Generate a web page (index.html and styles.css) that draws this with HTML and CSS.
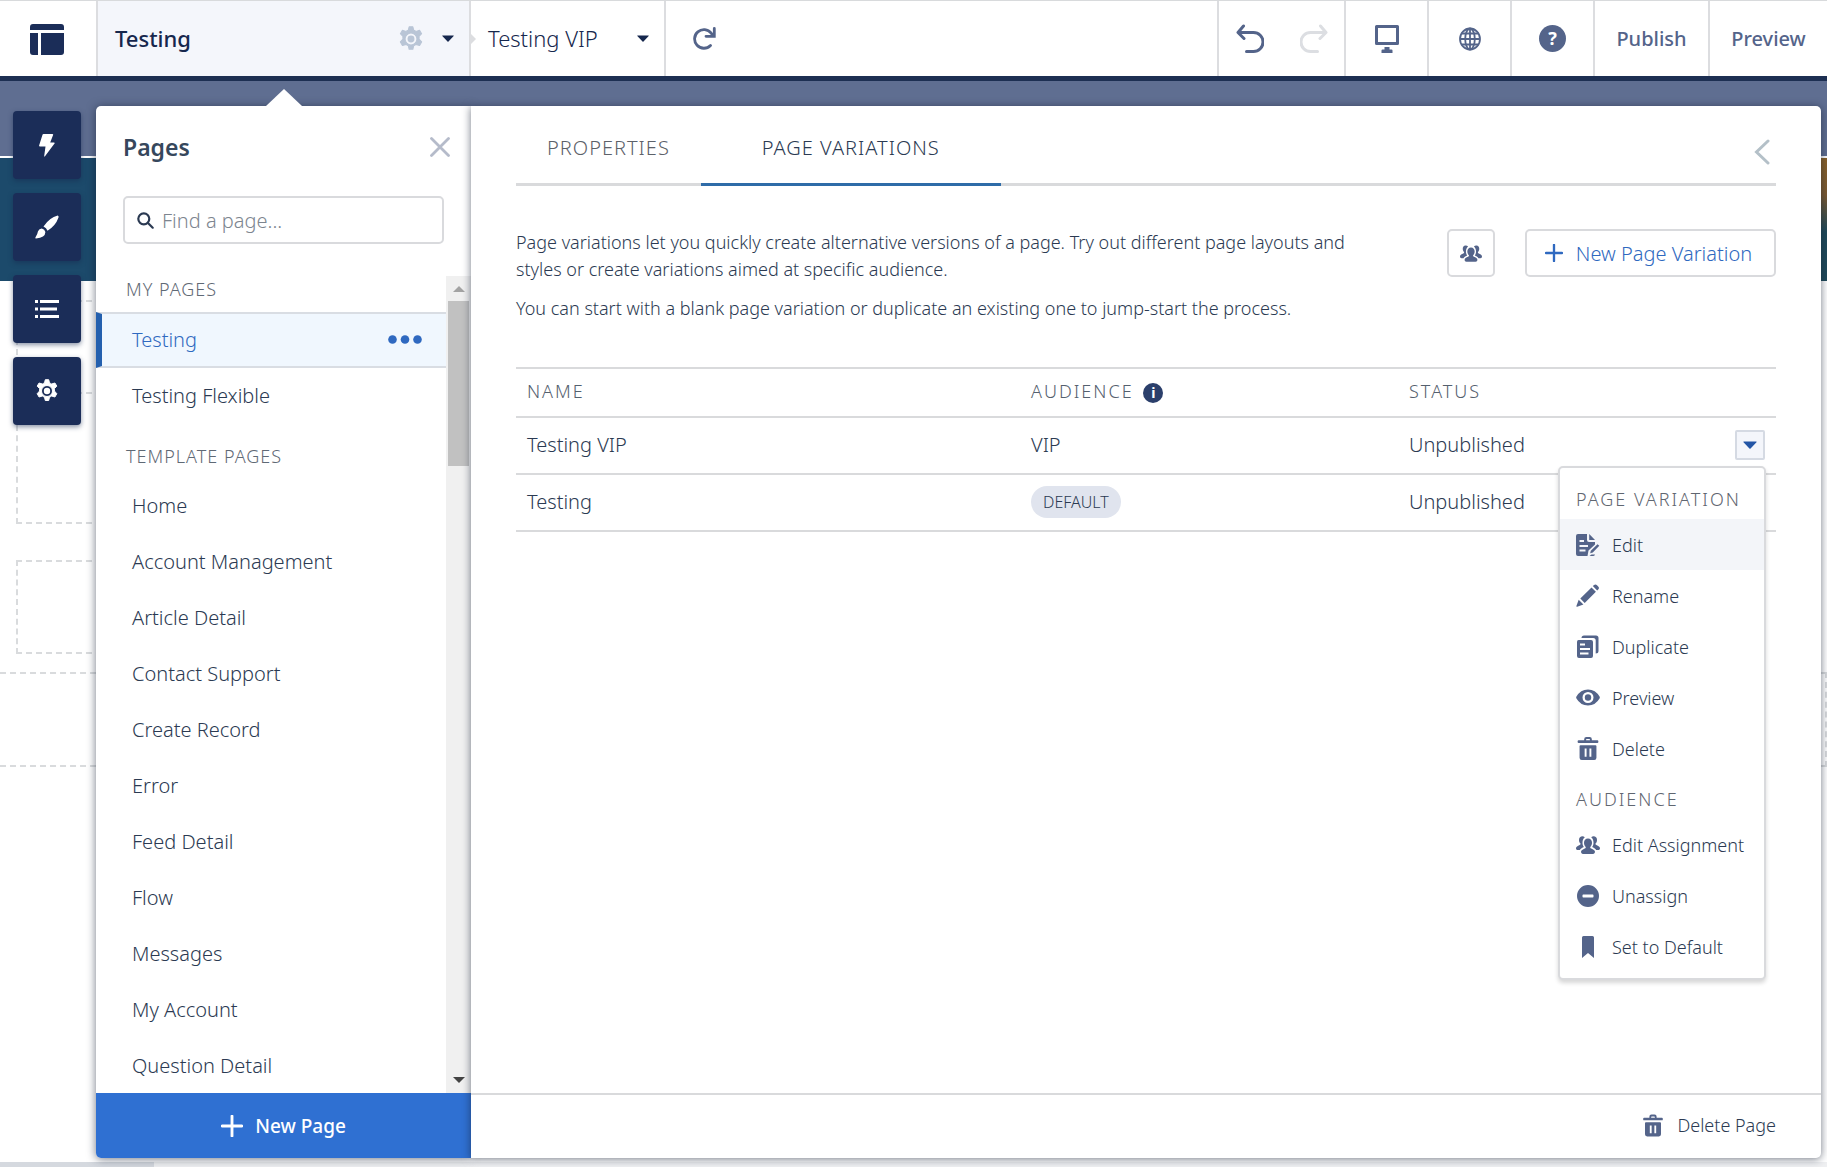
FILE: index.html
```html
<!DOCTYPE html>
<html lang="en">
  <head>
    <meta charset="UTF-8">
    <meta name="viewport" content="width=device-width, initial-scale=1">
    <link rel="stylesheet" href="styles.css">
    <title>Experience Builder</title>
  </head>
  <body>
    <!-- shared icons -->
    <svg class="sprite" aria-hidden="true">
      <symbol id="gear" viewBox="0 0 24 24">
        <path fill-rule="evenodd" d="M10.300 0.700h3.400l0.800 3.200q1.100 0.400 2.100 1.100l3.300-1 1.900 3.100-2.400 2.500q0.200 1.200 0 2.400l2.400 2.700-1.900 3.300-3.300-1q-1 0.800-2.100 1.200l-0.800 3.300h-3.400l-0.800-3.300q-1.100-0.400-2.100-1.200l-3.300 1-1.900-3.300 2.400-2.700q-0.200-1.200 0-2.400l-2.400-2.500 1.900-3.100 3.300 1q1-0.700 2.100-1.100zM12 6.500a5.500 5.500 0 1 0 0 11a5.500 5.500 0 1 0 0-11z" stroke="currentColor" stroke-width="1" stroke-linejoin="round"/>
        <circle cx="12" cy="12" r="3.200"/>
      </symbol>
      <symbol id="caret" viewBox="0 0 12 7">
        <path d="M0.500 0.500h11q0.500 0 0.200 0.500l-5.200 5.500q-0.500 0.500-1 0l-5.200-5.500q-0.300-0.500 0.200-0.500z"/>
      </symbol>
      <symbol id="people" viewBox="0 0 24 18">
        <path d="M12 2.500c2.500 0 4 1.900 4 4.300 0 1.700-0.700 3-1.500 3.900-0.600 0.800-0.200 1.500 0.700 1.900 2 0.900 3.800 1.700 3.800 3.200 0 1.200-0.800 2.200-2 2.200H7c-1.200 0-2-1-2-2.200 0-1.500 1.800-2.300 3.800-3.200 0.900-0.400 1.300-1.100 0.700-1.900C8.700 9.800 8 8.500 8 6.800c0-2.400 1.500-4.300 4-4.300z"/>
        <path d="M8.800 1.300C8 0.500 7 0.200 6 0.300 4 0.500 3 2 3 3.900c0 1.400 0.500 2.600 1.300 3.400 0.500 0.700 0.100 1.400-0.700 1.700C1.600 9.900 0 10.700 0 12.300c0 1 0.700 1.800 1.700 1.800h2.100c0.900-1.600 2.600-2.400 4-3C6.900 9.900 6.500 8.400 6.500 6.800c0-2.300 0.800-4.300 2.300-5.500zM15.200 1.300c0.800-0.800 1.800-1.100 2.800-1 2 0.200 3 1.700 3 3.600 0 1.400-0.500 2.600-1.300 3.400-0.500 0.700-0.100 1.400 0.700 1.700 2 0.900 3.600 1.700 3.600 3.300 0 1-0.700 1.800-1.700 1.800h-2.100c-0.900-1.600-2.600-2.400-4-3 0.900-1.200 1.300-2.700 1.300-4.300 0-2.300-0.800-4.300-2.300-5.500z"/>
      </symbol>
      <symbol id="trash" viewBox="0 0 22 24">
        <path fill-rule="evenodd" d="M1.200 3.500H7V2.300Q7 0 9.300 0h3.400Q15 0 15 2.300v1.200h5.800q1 0 1 1v0.800q0 1-1 1H1.200q-1 0-1-1V4.500q0-1 1-1zM9 3.500h4V2.600q0-0.600-0.600-0.600H9.600Q9 2 9 2.600z"/>
        <path fill-rule="evenodd" d="M3.200 8.500h15.600q1 0 1 1v12.200q0 2.300-2.300 2.300h-13q-2.300 0-2.300-2.300V9.500q0-1 1-1zM7.500 12v8.500h2V12zM12.500 12v8.500h2V12z"/>
      </symbol>
      <symbol id="plus" viewBox="0 0 20 20">
        <path d="M10 1v18M1 10h18" fill="none" stroke="currentColor" stroke-width="2.600" stroke-linecap="round"/>
      </symbol>
    </svg>

    <header class="topbar">
      <button class="bar-cell logo" aria-label="Builder menu">
        <svg width="34" height="31" viewBox="0 0 34 31">
          <path d="M3 0h28q3 0 3 3v3H0V3q0-3 3-3zM0 9h8v22H3q-3 0-3-3zM11 9h23v19q0 3-3 3H11z"/>
        </svg>
      </button>
      <div class="bar-cell page-picker">
        <span class="picker-name">Testing</span>
        <button class="icon-btn pale" aria-label="Page settings"><svg width="26" height="26"><use href="#gear"/></svg></button>
        <button class="icon-btn" aria-label="Choose page"><svg width="12" height="7"><use href="#caret"/></svg></button>
      </div>
      <div class="bar-cell variation-picker">
        <span>Testing VIP</span>
        <button class="icon-btn" aria-label="Choose variation"><svg width="12" height="7"><use href="#caret"/></svg></button>
      </div>
      <button class="icon-btn refresh" aria-label="Refresh">
        <svg width="24" height="24" viewBox="0 0 24 24" fill="none" stroke="currentColor" stroke-width="2.800">
          <path d="M17.500 18.500A9.300 9.300 0 1 1 18.200 6.200L20.500 8.500" stroke-linecap="round"/>
          <path d="M21.300 1.500V9.300H13" stroke-linecap="round"/>
        </svg>
      </button>

      <div class="bar-cell history">
        <button class="icon-btn" aria-label="Undo">
          <svg width="28" height="30" viewBox="0 0 28 30" fill="none" stroke="currentColor" stroke-width="3" stroke-linecap="round" stroke-linejoin="round">
            <path d="M7.500 2L2 8.500l6 6M2.500 8.500H17.500a9 9 0 0 1 0 19H10.500"/>
          </svg>
        </button>
        <button class="icon-btn faded" aria-label="Redo" disabled>
          <svg width="28" height="30" viewBox="0 0 28 30" fill="none" stroke="currentColor" stroke-width="3" stroke-linecap="round" stroke-linejoin="round">
            <path d="M20.500 2L26 8.500l-6 6M25.500 8.500H10.500a9 9 0 0 0 0 19H17.500"/>
          </svg>
        </button>
      </div>
      <button class="bar-cell square" aria-label="Desktop view">
        <svg width="24" height="28" viewBox="0 0 24 28">
          <path fill-rule="evenodd" d="M1.500 0h21Q24 0 24 1.500v17q0 1.500-1.500 1.500h-21Q0 20 0 18.500v-17Q0 0 1.500 0zM3 3v14h18V3z"/>
          <path d="M9.500 22h5v2.500h2q1 0 1 1V28H6.500v-2.500q0-1 1-1h2z"/>
        </svg>
      </button>
      <button class="bar-cell square" aria-label="Languages">
        <svg width="22" height="24" viewBox="0 0 22 24" fill="none" stroke="currentColor" stroke-width="1.800">
          <ellipse cx="11" cy="12" rx="10" ry="10.500"/>
          <ellipse cx="11" cy="12" rx="4.800" ry="10.500"/>
          <path d="M11 1.500v21M1 12h20M2.500 6.500h17M2.500 17.500h17"/>
        </svg>
      </button>
      <button class="bar-cell square help" aria-label="Help"><span class="help-mark">?</span></button>
      <button class="bar-cell text-btn publish">Publish</button>
      <button class="bar-cell text-btn">Preview</button>
    </header>

    <main class="workspace">
      <!-- site being edited, mostly hidden behind the panels -->
      <div class="canvas" aria-hidden="true">
        <div class="site-nav"></div>
        <div class="site-hero"></div>
        <div class="site-body">
          <div class="drop-zone"></div>
          <div class="drop-zone joined"></div>
          <div class="drop-zone spaced"></div>
        </div>
        <div class="site-footer"></div>
        <div class="canvas-scroll"><div class="canvas-thumb"></div></div>
      </div>

      <nav class="tools">
        <button class="tool" aria-label="Components">
          <svg width="16" height="23" viewBox="0 0 16 23"><path d="M4.500 0h9q1 0 0.600 0.900L11.200 8.500h3.800q1.300 0 0.500 1.100L6 22.300q-0.800 0.900-0.800-0.300L6.500 12.500H1q-1.200 0-0.900-1.100L3.500 0.800Q3.700 0 4.500 0z"/></svg>
        </button>
        <button class="tool" aria-label="Theme">
          <svg width="24" height="24" viewBox="0 0 24 24"><path d="M22.700 0.500q1.300 0.300 0.800 2Q20.500 11 12.500 15.700q-1-2.800-4-4.200Q14.500 2.500 22.700 0.500zM6.800 13.500q3 0.600 3.600 3.600-0.200 6-9.400 6.400-1 0-0.600-1 2.200-3.300 2.600-6.200 1.200-2.800 3.800-2.800z"/></svg>
        </button>
        <button class="tool" aria-label="Page structure">
          <svg width="24" height="18" viewBox="0 0 24 18"><path d="M0 0h3v3H0zM5 0h19v3H5zM0 7.500h3v3H0zM5 7.500h17v3H5zM0 15h3v3H0zM5 15h19v3H5z"/></svg>
        </button>
        <button class="tool" aria-label="Settings"><svg width="24" height="24"><use href="#gear"/></svg></button>
      </nav>

      <section class="pages-panel">
        <div class="pages-head">
          <h1>Pages</h1>
          <button class="icon-btn muted" aria-label="Close">
            <svg width="20" height="20" viewBox="0 0 20 20" fill="none" stroke="currentColor" stroke-width="2.800" stroke-linecap="round"><path d="M1.500 1.500l17 17M18.500 1.500l-17 17"/></svg>
          </button>
        </div>
        <label class="search">
          <svg width="17" height="17" viewBox="0 0 17 17" fill="none" stroke="currentColor" stroke-width="2.200" stroke-linecap="round"><circle cx="6.800" cy="6.800" r="5.500"/><path d="M11 11l4.700 4.700"/></svg>
          <input type="text" placeholder="Find a page..." aria-label="Find a page">
        </label>
        <div class="list-area">
          <div class="page-list">
            <h2>MY PAGES</h2>
            <ul>
              <li class="selected">
                <a href="#">Testing</a>
                <button class="icon-btn" aria-label="Page actions"><svg width="34" height="9" viewBox="0 0 34 9"><circle cx="4.500" cy="4.500" r="4.300"/><circle cx="17" cy="4.500" r="4.300"/><circle cx="29.500" cy="4.500" r="4.300"/></svg></button>
              </li>
              <li><a href="#">Testing Flexible</a></li>
            </ul>
            <h2>TEMPLATE PAGES</h2>
            <ul>
              <li><a href="#">Home</a></li>
              <li><a href="#">Account Management</a></li>
              <li><a href="#">Article Detail</a></li>
              <li><a href="#">Contact Support</a></li>
              <li><a href="#">Create Record</a></li>
              <li><a href="#">Error</a></li>
              <li><a href="#">Feed Detail</a></li>
              <li><a href="#">Flow</a></li>
              <li><a href="#">Messages</a></li>
              <li><a href="#">My Account</a></li>
              <li><a href="#">Question Detail</a></li>
            </ul>
          </div>
          <div class="scrollbar" aria-hidden="true">
            <svg class="up" width="12" height="6" viewBox="0 0 12 6"><path d="M6 0l6 6H0z"/></svg>
            <div class="thumb"></div>
            <svg class="down" width="12" height="6" viewBox="0 0 12 6"><path d="M0 0h12L6 6z"/></svg>
          </div>
        </div>
        <button class="new-page"><svg width="22" height="22"><use href="#plus"/></svg>New Page</button>
      </section>

      <section class="detail-panel">
        <div class="detail-main">
          <div class="tabs">
            <button class="tab">PROPERTIES</button>
            <button class="tab active">PAGE VARIATIONS</button>
            <button class="icon-btn collapse" aria-label="Collapse">
              <svg width="16" height="26" viewBox="0 0 16 26" fill="none" stroke="currentColor" stroke-width="3" stroke-linecap="round"><path d="M14 2L2.500 13L14 24"/></svg>
            </button>
          </div>

          <div class="intro">
            <div class="intro-text">
              <p>Page variations let you quickly create alternative versions of a page. Try out different page layouts and styles or create variations aimed at specific audience.</p>
              <p>You can start with a blank page variation or duplicate an existing one to jump-start the process.</p>
            </div>
            <button class="outline-btn people-btn" aria-label="Manage audiences"><svg width="22" height="17"><use href="#people"/></svg></button>
            <button class="outline-btn new-variation"><svg width="18" height="18"><use href="#plus"/></svg>New Page Variation</button>
          </div>

          <table class="variations">
            <thead>
              <tr>
                <th class="col-name">NAME</th>
                <th class="col-audience">AUDIENCE <span class="info">i</span></th>
                <th>STATUS</th>
                <th class="col-action"></th>
              </tr>
            </thead>
            <tbody>
              <tr>
                <td>Testing VIP</td>
                <td>VIP</td>
                <td>Unpublished</td>
                <td class="col-action">
                  <button class="row-btn" aria-label="Show actions"><svg width="14" height="8"><use href="#caret"/></svg></button>
                  <div class="menu">
                    <h3>PAGE VARIATION</h3>
                    <button class="menu-item current">
                      <svg width="24" height="22" viewBox="0 0 24 22">
                        <path fill-rule="evenodd" d="M2 0h9v6q0 2 2 2h6v2.500l-6.500 6-1 5.500H2q-2 0-2-2V2Q0 0 2 0zM3.500 6v2H8V6zM3.500 11v2H12v-2zM3.500 15.500v2H9.500v-2z"/>
                        <path d="M13.200 0l5.800 6h-5.800zM21.500 10.200l1.800 1.600-6.500 6.700-2.600 0.800 0.600-2.500zM15.500 20.500h3.500q-0.500 1.500-2 1.500h-3.500z"/>
                      </svg>
                      Edit
                    </button>
                    <button class="menu-item">
                      <svg width="24" height="23" viewBox="0 0 24 23">
                        <path d="M17.800 1.200q1.600-1.500 3.200 0l1.200 1.200q1.500 1.500 0 3.100l-1 1-4.400-4.400zM15.500 3.400l4.400 4.400L8.700 19l-4.400-4.400zM2.700 15.800l4.700 4.700-6.200 2.200q-1.100 0.300-0.800-0.800z"/>
                      </svg>
                      Rename
                    </button>
                    <button class="menu-item">
                      <svg width="24" height="23" viewBox="0 0 24 23">
                        <path fill-rule="evenodd" d="M2.500 5H15q2 0 2 2v14q0 2-2 2H3q-2 0-2-2V7Q1 5 2.500 5zM4 8.500v2H9v-2zM4 13v2h10v-2zM4 17.500v2h8.500v-2z"/>
                        <path d="M5.500 3Q5.500 0.500 8 0.500h12Q22.500 0.500 22.500 3v13q0 2.500-2.800 2.500V5.500Q19.700 3 17.200 3z"/>
                      </svg>
                      Duplicate
                    </button>
                    <button class="menu-item">
                      <svg width="24" height="17" viewBox="0 0 24 17">
                        <path fill-rule="evenodd" d="M0.300 7.800Q4.500 0.500 12 0.500t11.700 7.300q0.300 0.700 0 1.400Q19.500 16.500 12 16.500T0.300 9.200q-0.300-0.700 0-1.400zM12 3a5.500 5.500 0 1 0 0 11a5.500 5.500 0 1 0 0-11z"/>
                        <circle cx="12" cy="8.500" r="3.200"/>
                      </svg>
                      Preview
                    </button>
                    <button class="menu-item"><svg width="24" height="23"><use href="#trash"/></svg>Delete</button>
                    <h3 class="second">AUDIENCE</h3>
                    <button class="menu-item"><svg width="24" height="18"><use href="#people"/></svg>Edit Assignment</button>
                    <button class="menu-item">
                      <svg width="24" height="22" viewBox="0 0 24 22"><path fill-rule="evenodd" d="M12 0a11 11 0 1 0 0 22a11 11 0 1 0 0-22zM7.200 9.500h9.600q0.700 0 0.700 0.700v1.600q0 0.700-0.700 0.700H7.200q-0.700 0-0.700-0.700v-1.600q0-0.700 0.700-0.700z"/></svg>
                      Unassign
                    </button>
                    <button class="menu-item">
                      <svg width="24" height="22" viewBox="0 0 24 22"><path d="M7.500 0h9Q18 0 18 1.500V22l-6-5-6 5V1.500Q6 0 7.500 0z"/></svg>
                      Set to Default
                    </button>
                  </div>
                </td>
              </tr>
              <tr>
                <td>Testing</td>
                <td><span class="badge">DEFAULT</span></td>
                <td>Unpublished</td>
                <td class="col-action"></td>
              </tr>
            </tbody>
          </table>
        </div>
        <footer class="detail-foot">
          <button class="delete-page"><svg width="20" height="23"><use href="#trash"/></svg>Delete Page</button>
        </footer>
      </section>
    </main>
  </body>
</html>
```
FILE: styles.css
```css
* {
    box-sizing: border-box;
}

body {
    margin: 0;
    height: 100vh;
    display: flex;
    flex-direction: column;
    overflow: hidden;
    font-family: "Noto Sans", "Open Sans", sans-serif;
    font-weight: 300;
    font-size: 20px;
    color: #2b3a52;
    background: #fff;
}

button {
    margin: 0;
    padding: 0;
    border: none;
    background: none;
    font: inherit;
    color: inherit;
    cursor: pointer;
}

svg {
    display: block;
    flex: none;
    fill: currentColor;
}

svg[fill="none"] {
    fill: none;
}

h1, h2, h3, p, ul {
    margin: 0;
    padding: 0;
}

.sprite {
    position: absolute;
    width: 0;
    height: 0;
}

.icon-btn {
    display: flex;
    align-items: center;
    justify-content: center;
}

/* top bar */

.topbar {
    display: flex;
    flex: none;
    height: 81px;
    border-top: 1px solid #d8dadc;
    border-bottom: 5px solid #1d2f52;
    color: #54648a;
}

.bar-cell {
    display: flex;
    align-items: center;
    justify-content: center;
    border-right: 2px solid #dcdde0;
}

.bar-cell:last-child {
    border-right: none;
}

.logo {
    width: 98px;
    padding: 2px 2px 0 0;
    color: #1b2d58;
}

.page-picker {
    position: relative;
    width: 373px;
    padding: 0 15px 0 17px;
    gap: 18px;
    background: #f4f6fb;
    color: #16274d;
}

.page-picker::after {
    content: "";
    position: absolute;
    left: 100%;
    top: 50%;
    margin-top: -7px;
    border: 7px solid transparent;
    border-left-color: #dcdde0;
    border-right: none;
}

.picker-name {
    flex: 1;
    padding-bottom: 2px;
    font-size: 22px;
    font-weight: 500;
}

.pale {
    color: #b9c5d6;
}

.variation-picker {
    width: 195px;
    padding: 0 15px 0 17px;
    justify-content: space-between;
    font-size: 22px;
    color: #16274d;
}

.variation-picker span {
    padding-bottom: 2px;
}

.refresh {
    margin-right: auto;
    padding: 0 27px;
}

.history {
    width: 129px;
    gap: 36px;
    border-left: 2px solid #dcdde0;
}

.faded {
    color: #dcdee2;
}

.square {
    width: 83px;
}

.help-mark {
    width: 27px;
    height: 27px;
    line-height: 27px;
    border-radius: 50%;
    background: #54648a;
    color: #fff;
    font-size: 18px;
    font-weight: 700;
    text-align: center;
}

.text-btn {
    width: 117px;
    font-weight: 500;
}

.publish {
    width: 115px;
}

/* edited site */

.workspace {
    position: relative;
    flex: 1;
    min-height: 0;
    display: flex;
    padding: 25px 6px 9px 13px;
}

.canvas {
    position: absolute;
    inset: 0;
    display: flex;
    flex-direction: column;
}

.site-nav {
    height: 77px;
    background: #5f6e91;
    border-bottom: 2px solid #fff;
}

.site-hero {
    height: 123px;
    background: linear-gradient(90deg, #1c4a6b 50%, transparent 50%), linear-gradient(#8a6228, #7b5a30 30%, #1f4a5a 60%, #1f4a5a);
}

.site-body {
    height: 391px;
    padding: 19px 16px 0;
}

.drop-zone {
    height: 94px;
    border: 2px dashed #d9dbdd;
}

.joined {
    height: 130px;
    margin-top: 0;
    border-top: none;
}

.spaced {
    margin-top: 36px;
}

.site-footer {
    height: 95px;
    border: 2px dashed #d9dbdd;
    border-left: none;
}

.canvas-scroll {
    height: 5px;
    margin-top: auto;
    background: #eff0f2;
}

.canvas-thumb {
    width: 154px;
    height: 5px;
    background: #d5d9df;
}

/* floating tools */

.tools {
    position: relative;
    display: flex;
    flex-direction: column;
    gap: 14px;
    width: 83px;
    padding-top: 5px;
}

.tool {
    width: 68px;
    height: 68px;
    display: flex;
    align-items: center;
    justify-content: center;
    border-radius: 4px;
    background: #1b2d58;
    color: #fff;
    box-shadow: 0 2px 5px rgba(22, 39, 77, 0.5);
}

/* pages panel */

.pages-panel {
    position: relative;
    display: flex;
    flex-direction: column;
    width: 375px;
    border-radius: 5px 0 0 5px;
    background: #fff;
    box-shadow: 0 1px 10px rgba(20, 30, 50, 0.6);
}

.pages-panel::before {
    content: "";
    position: absolute;
    left: 50%;
    top: -17px;
    margin-left: -18px;
    border: 18px solid transparent;
    border-top: none;
    border-bottom: 17px solid #fff;
}

.pages-head {
    display: flex;
    align-items: center;
    justify-content: space-between;
    padding: 24px 21px 0 27px;
}

.pages-head h1 {
    font-size: 23px;
    font-weight: 600;
    line-height: 34px;
    color: #36475c;
}

.muted {
    color: #b5bbca;
}

.search {
    display: flex;
    align-items: center;
    gap: 8px;
    height: 48px;
    margin: 32px 27px;
    padding: 0 12px;
    border: 2px solid #d9dadd;
    border-radius: 5px;
}

.search input {
    flex: 1;
    min-width: 0;
    padding: 0;
    border: none;
    outline: none;
    background: none;
    font: inherit;
    color: inherit;
}

.search input::placeholder {
    color: #7d858f;
    opacity: 1;
}

.list-area {
    display: flex;
    flex: 1;
    min-height: 0;
}

.page-list {
    flex: 1;
    padding-top: 1px;
    overflow: hidden;
}

.page-list h2 {
    padding: 0 30px;
    font-size: 18px;
    font-weight: 300;
    line-height: 24px;
    letter-spacing: 1px;
    color: #5f6975;
}

.page-list ul {
    margin: 11px 0 20px;
    list-style: none;
}

.page-list ul + h2 + ul {
    margin-top: 10px;
}

.page-list li {
    display: flex;
    align-items: center;
    justify-content: space-between;
    height: 56px;
    padding: 0 24px 2px 36px;
}

.page-list li a {
    color: inherit;
    text-decoration: none;
}

.page-list .selected {
    padding: 0 24px 2px 30px;
    border: 2px solid #d9dde3;
    border-right: none;
    border-left: 6px solid #2460ae;
    background: #f0f7fe;
    color: #2f69c0;
}

.scrollbar {
    display: flex;
    flex-direction: column;
    align-items: center;
    width: 25px;
    padding: 10px 2px;
    background: #f0f0f0;
    color: #a3a3a3;
}

.thumb {
    width: 21px;
    height: 165px;
    margin-top: 9px;
    background: #c1c1c1;
}

.scrollbar .down {
    margin-top: auto;
    color: #434343;
}

.new-page {
    display: flex;
    align-items: center;
    justify-content: center;
    gap: 12px;
    height: 65px;
    border-radius: 0 0 0 5px;
    background: #2f70d2;
    color: #fff;
    font-size: 19px;
    font-weight: 500;
}

/* detail panel */

.detail-panel {
    position: relative;
    display: flex;
    flex: 1;
    flex-direction: column;
    min-width: 0;
    border-radius: 0 5px 5px 0;
    background: #fff;
    box-shadow: 0 1px 8px rgba(20, 30, 50, 0.6);
}

.detail-main {
    flex: 1;
    padding: 0 45px;
}

.tabs {
    display: flex;
    height: 80px;
    border-bottom: 3px solid #d9dadc;
}

.tab {
    height: 80px;
    padding: 6px 31px 0 31px;
    border-bottom: 3px solid transparent;
    letter-spacing: 1px;
    color: #5c6169;
}

.tab.active {
    padding: 6px 61px 0;
    border-bottom-color: #2f6ca8;
    color: #2b3a52;
}

.collapse {
    margin: 14px 6px 0 auto;
    color: #b4c0c8;
}

.intro {
    display: flex;
    align-items: flex-start;
    margin-top: 43px;
}

.intro-text {
    flex: 1;
    font-size: 18px;
    line-height: 27px;
    padding-right: 84px;
}

.intro-text p + p {
    margin-top: 12px;
}

.outline-btn {
    display: flex;
    align-items: center;
    justify-content: center;
    height: 48px;
    border: 2px solid #d9dadd;
    border-radius: 5px;
}

.people-btn {
    width: 48px;
    color: #54648a;
}

.new-variation {
    width: 251px;
    margin-left: 30px;
    padding-right: 4px;
    gap: 13px;
    color: #2f69c0;
}

.variations {
    width: 100%;
    margin-top: 45px;
    border-collapse: collapse;
    table-layout: fixed;
}

.variations tr {
    height: 57px;
    border-bottom: 2px solid #d9dadc;
}

.variations thead tr {
    height: 49px;
    border-top: 2px solid #d9dadc;
}

.variations th,
.variations td {
    padding: 0 11px 2px;
    text-align: left;
}

.variations th {
    padding-bottom: 4px;
    font-size: 18px;
    font-weight: 300;
    letter-spacing: 2px;
    color: #54606e;
}

.col-name {
    width: 40%;
}

.col-audience {
    width: 30%;
}

.variations .col-action {
    position: relative;
    width: 120px;
}

.info {
    display: inline-block;
    width: 20px;
    height: 20px;
    margin-left: 3px;
    border-radius: 50%;
    background: #2b3f6b;
    color: #fff;
    font-size: 14px;
    font-weight: 700;
    line-height: 20px;
    letter-spacing: 0;
    text-align: center;
}

.badge {
    display: inline-block;
    padding: 0 12px;
    border-radius: 16px;
    background: #e0e4ee;
    font-size: 16px;
    line-height: 32px;
    vertical-align: middle;
}

.row-btn {
    display: flex;
    align-items: center;
    justify-content: center;
    width: 30px;
    height: 30px;
    margin-left: auto;
    border: 2px solid #d5dae3;
    border-radius: 2px;
    background: #f4f6fb;
    color: #2456a6;
}

.menu {
    position: absolute;
    z-index: 2;
    top: 48px;
    right: 10px;
    width: 208px;
    padding: 11px 0 6px;
    border: 2px solid #d9dadd;
    border-radius: 5px;
    background: #fff;
    box-shadow: 0 3px 4px rgba(0, 0, 0, 0.16);
}

.menu h3 {
    padding: 0 16px;
    font-size: 18px;
    font-weight: 300;
    line-height: 40px;
    letter-spacing: 2px;
    color: #5f6670;
    white-space: nowrap;
}

.menu .second {
    padding-top: 5px;
}

.menu-item {
    display: flex;
    align-items: center;
    gap: 12px;
    width: 100%;
    height: 51px;
    padding: 0 16px;
    font-size: 18px;
    white-space: nowrap;
}

.menu-item svg {
    color: #54648a;
}

.menu-item.current {
    background: #f3f5f9;
}

.detail-foot {
    display: flex;
    justify-content: flex-end;
    height: 65px;
    padding: 0 45px 3px;
    border-top: 2px solid #d9dadc;
}

.delete-page {
    display: flex;
    align-items: center;
    gap: 14px;
    font-size: 18px;
}

.delete-page svg {
    color: #54648a;
}
```
